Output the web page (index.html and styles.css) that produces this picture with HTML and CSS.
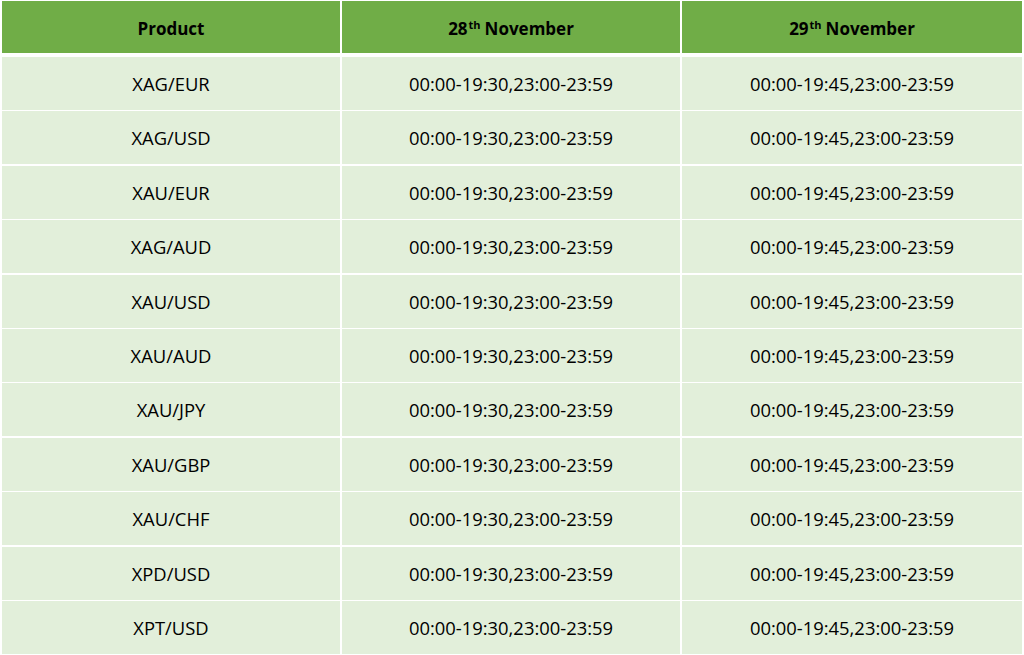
FILE: index.html
```html
<!DOCTYPE html>
<html>
<head>
<meta charset="utf-8">
<link rel="stylesheet" href="styles.css">
</head>
<body>
<div class="table">
  <div class="row head">
    <div class="cell">Product</div>
    <div class="cell">28<sup>th</sup> November</div>
    <div class="cell">29<sup>th</sup> November</div>
  </div>
  <div class="body">
    <div class="row"><div class="cell">XAG/EUR</div><div class="cell">00:00-19:30,23:00-23:59</div><div class="cell">00:00-19:45,23:00-23:59</div></div>
    <div class="row"><div class="cell">XAG/USD</div><div class="cell">00:00-19:30,23:00-23:59</div><div class="cell">00:00-19:45,23:00-23:59</div></div>
    <div class="row"><div class="cell">XAU/EUR</div><div class="cell">00:00-19:30,23:00-23:59</div><div class="cell">00:00-19:45,23:00-23:59</div></div>
    <div class="row"><div class="cell">XAG/AUD</div><div class="cell">00:00-19:30,23:00-23:59</div><div class="cell">00:00-19:45,23:00-23:59</div></div>
    <div class="row"><div class="cell">XAU/USD</div><div class="cell">00:00-19:30,23:00-23:59</div><div class="cell">00:00-19:45,23:00-23:59</div></div>
    <div class="row"><div class="cell">XAU/AUD</div><div class="cell">00:00-19:30,23:00-23:59</div><div class="cell">00:00-19:45,23:00-23:59</div></div>
    <div class="row"><div class="cell">XAU/JPY</div><div class="cell">00:00-19:30,23:00-23:59</div><div class="cell">00:00-19:45,23:00-23:59</div></div>
    <div class="row"><div class="cell">XAU/GBP</div><div class="cell">00:00-19:30,23:00-23:59</div><div class="cell">00:00-19:45,23:00-23:59</div></div>
    <div class="row"><div class="cell">XAU/CHF</div><div class="cell">00:00-19:30,23:00-23:59</div><div class="cell">00:00-19:45,23:00-23:59</div></div>
    <div class="row"><div class="cell">XPD/USD</div><div class="cell">00:00-19:30,23:00-23:59</div><div class="cell">00:00-19:45,23:00-23:59</div></div>
    <div class="row"><div class="cell">XPT/USD</div><div class="cell">00:00-19:30,23:00-23:59</div><div class="cell">00:00-19:45,23:00-23:59</div></div>
  </div>
</div>
</body>
</html>
```

FILE: styles.css
```css
html, body {
  margin: 0;
  padding: 0;
  background: #ffffff;
}
body {
  font-family: "Open Sans", "Liberation Sans", sans-serif;
  font-size: 18.4px;
  color: #000000;
}
.table {
  display: flex;
  flex-direction: column;
  padding: 1px 2px 0 2px;
  width: 1020px;
}
.row {
  display: grid;
  grid-template-columns: 338px 338px 340px;
  column-gap: 2px;
}
.body {
  display: flex;
  flex-direction: column;
  gap: 1.4px;
  margin-top: 4px;
}
.cell {
  display: flex;
  align-items: center;
  justify-content: center;
  height: 53px;
  background: #e2efda;
}
.head .cell {
  height: 50px;
  padding-top: 2px;
  background: #70ad47;
  font-weight: 700;
  font-size: 17px;
}
.head sup {
  font-size: 11px;
  line-height: 0;
  position: relative;
  top: -3px;
  margin-right: 4px;
  margin-left: 1px;
}
```
